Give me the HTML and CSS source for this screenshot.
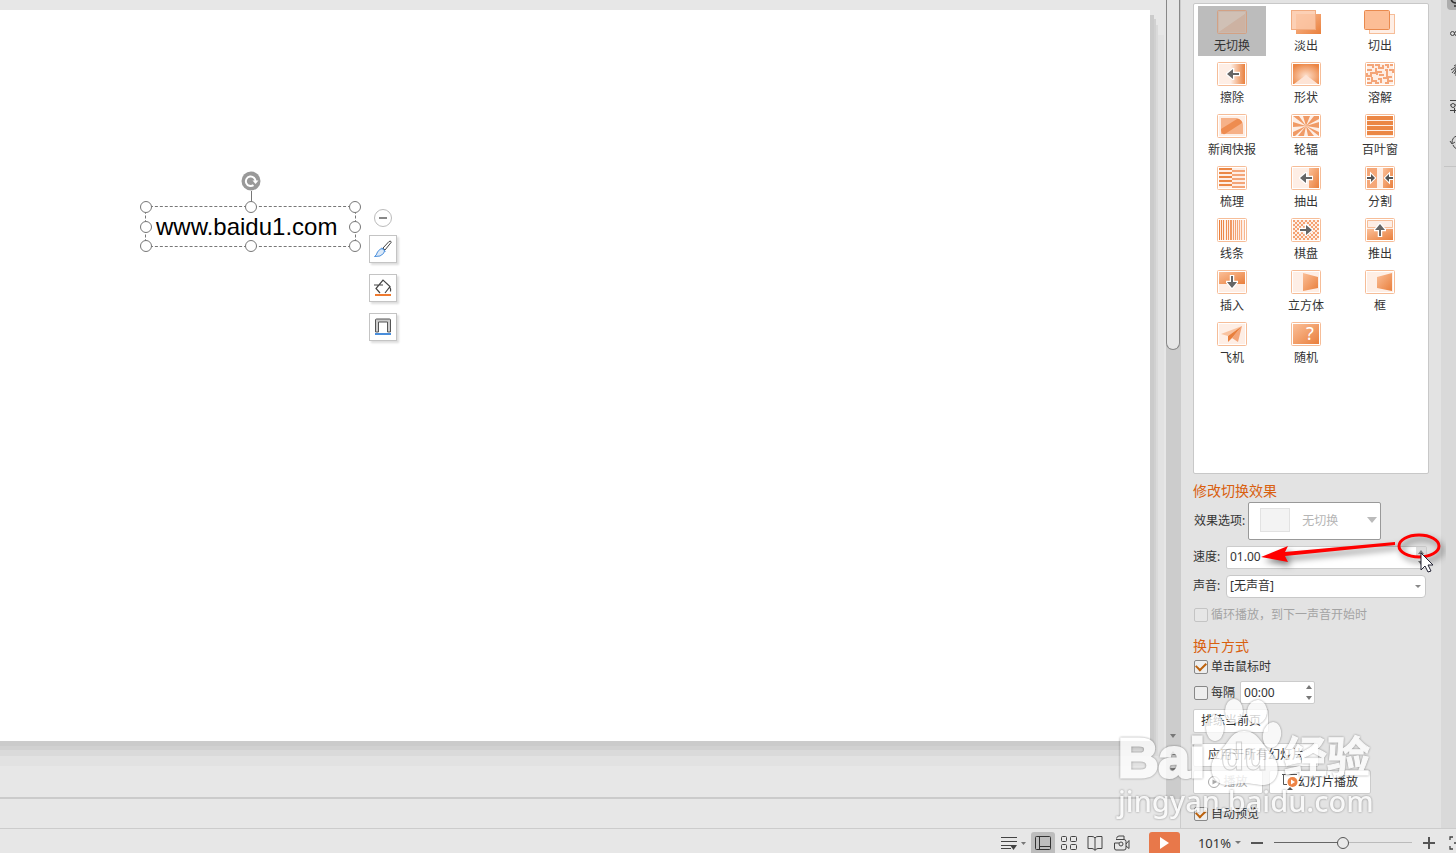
FILE: index.html
```html
<!DOCTYPE html>
<html lang="zh-CN">
<head>
  <meta charset="UTF-8">
  <meta name="viewport" content="width=device-width, initial-scale=1.0">
  <title>幻灯片切换</title>
  <link rel="stylesheet" href="styles.css">
</head>
<body>

<!-- shared gradients and patterns for the transition icons -->
<svg class="defs" width="0" height="0" aria-hidden="true">
  <defs>
    <linearGradient id="g-diag" x1="0" y1="0" x2="1" y2="1"><stop offset="0" stop-color="#fbbf98"/><stop offset="1" stop-color="#e97f3c"/></linearGradient>
    <linearGradient id="g-right" x1="0" x2="1"><stop offset="0" stop-color="#feeee5"/><stop offset=".45" stop-color="#feeee5"/><stop offset="1" stop-color="#e97f3c"/></linearGradient>
    <linearGradient id="g-left" x1="0" x2="1"><stop offset="0" stop-color="#e97f3c"/><stop offset="1" stop-color="#f9b790"/></linearGradient>
    <radialGradient id="g-shape" cx=".5" cy=".6" r=".65"><stop offset="0" stop-color="#fde0cd"/><stop offset="1" stop-color="#ec8543"/></radialGradient>
    <pattern id="p-check" width="4" height="4" patternUnits="userSpaceOnUse"><path d="M0 0h2v2H0zM2 2h2v2H2z" fill="#f4a171"/></pattern>
    <symbol id="frame" viewBox="0 0 30 24"><rect x=".5" y=".5" width="29" height="23" rx="1" fill="#fff" stroke="#f6bd98"/><rect x="2" y="2" width="26" height="20" fill="#feeee5"/></symbol>
    <symbol id="arrow" viewBox="0 0 14 12"><path d="M1 6l6-5v4h6v2H7v4z" fill="#666" stroke="#fff" stroke-width="2.500" paint-order="stroke"/></symbol>
  </defs>
</svg>

<div class="app">
  <div class="main">
    <div class="editor">
      <div class="workspace">
        <div class="slide">
          <div class="textbox">
            <span class="stem"></span>
            <button class="rotate" aria-label="旋转"><svg width="20" height="20" viewBox="0 0 20 20"><circle cx="10" cy="10" r="9.500" fill="#999"/><path d="M14.500 10.500a4.800 4.800 0 1 0-2 3.600" fill="none" stroke="#fff" stroke-width="2"/><path d="M11.500 9.500h6l-3 3.500z" fill="#fff"/></svg></button>
            <p>www.baidu1.com</p>
            <i class="handle nw"></i><i class="handle n"></i><i class="handle ne"></i>
            <i class="handle w"></i><i class="handle e"></i>
            <i class="handle sw"></i><i class="handle s"></i><i class="handle se"></i>
          </div>
          <div class="float-tools">
            <button class="collapse" aria-label="收起"></button>
            <button class="tool" aria-label="样式"><svg width="20" height="20" viewBox="0 0 20 20" fill="none"><path d="M10 9l6-6.500q2-1.200 2.200.8L12 11z" stroke="#444"/><path d="M1.500 17.500q2-1 3-4.500 2.500-4 5.500-3.500 3 2 .5 5Q8 18 1.500 17.500z" fill="#dbe9f8" stroke="#4a8edb"/><path d="M8.500 9l4 3.500" stroke="#4a8edb"/></svg></button>
            <button class="tool" aria-label="填充"><svg width="20" height="20" viewBox="0 0 20 20" fill="none" stroke="#444" stroke-width="1.200"><path d="M7 15l-4-4.500L10 2l7 6.500-5 6.500M1 7h9M16.500 8.500q1.500 2 1 5"/><path d="M2 17h16" stroke="#ee7a30" stroke-width="2"/></svg></button>
            <button class="tool" aria-label="轮廓"><svg width="20" height="20" viewBox="0 0 20 20" fill="none" stroke="#555"><path d="M2.500 15V3q0-1 1-1h13q1 0 1 1v12h-3V5h-9v10z" fill="#ccc"/><path d="M2 17h16" stroke="#4a8edb" stroke-width="2"/></svg></button>
          </div>
        </div>
        <div class="scrollbar">
          <div class="thumb"></div>
          <div class="scroll-btns">
            <button class="tri down" aria-label="向下滚动"></button>
            <button class="tri up" aria-label="上一页"></button>
            <button class="tri down" aria-label="下一页"></button>
          </div>
        </div>
      </div>
      <div class="notes"></div>
    </div>

    <div class="panel">
      <div class="gallery">
        <button class="fx selected"><svg viewBox="0 0 30 24"><rect x=".5" y=".5" width="29" height="23" rx="1" fill="#c9b8ad" stroke="#d3a184"/><path d="M2 22L28 4V2H2z" fill="#d0c0b5"/><path d="M2 22L28 4v18z" fill="#cdb2a2"/></svg>无切换</button>
        <button class="fx"><svg viewBox="0 0 30 24"><path d="M5 4h25v20H5z" fill="url(#g-diag)"/><rect x=".5" y=".5" width="24" height="19" fill="#fcc8a8" fill-opacity=".85" stroke="#f1ab80"/></svg>淡出</button>
        <button class="fx"><svg class="wide" viewBox="0 0 32 24"><rect x="5.500" y="4.500" width="25" height="19" fill="#feeee5" stroke="#f6bd98"/><rect x=".5" y=".5" width="25" height="19" rx="1" fill="#fcbd95" stroke="#e98a4e"/></svg>切出</button>

        <button class="fx"><svg viewBox="0 0 30 24"><use href="#frame"/><rect x="2" y="2" width="26" height="20" fill="url(#g-right)"/><use href="#arrow" x="9" y="6" width="14" height="12"/></svg>擦除</button>
        <button class="fx"><svg viewBox="0 0 30 24"><use href="#frame"/><rect x="2" y="2" width="26" height="20" fill="url(#g-shape)"/><path d="M3 22l12-9 12 9z" fill="#fde4d6"/></svg>形状</button>
        <button class="fx"><svg viewBox="0 0 30 24"><use href="#frame"/><path d="M2 3h6v3M10 3h4v3h4V3M20 3h3v3M25 3h3M2 8h5M11 6v4h6M20 8h2v4M24 8h4v3M2 11v3h4v-3h6v2M14 13h5M22 12v3h5M2 17h3M7 15v4h5M13 17h3v4M18 16h5v3h5M2 21h5M10 21h4M20 21h4" fill="none" stroke="#f4a578" stroke-width="2"/></svg>溶解</button>

        <button class="fx"><svg viewBox="0 0 30 24"><use href="#frame"/><path d="M4 4h22v16H4z" fill="#f6b188"/><path d="M4 15L20 5q5-1 5 4L8 20q-4 1-4-5z" fill="#ee8c50"/><path d="M20 4h6v7q0-5-6-7z" fill="#feeee5"/></svg>新闻快报</button>
        <button class="fx"><svg viewBox="0 0 30 24"><use href="#frame"/><path d="M15 12L2 2h6zM15 12L12 2h7zM15 12L23 2h5v3zM15 12l13-4v6zM15 12l13 6v4zM15 12l8 10h-6zM15 12l-2 10H7zM15 12L4 22H2v-4zM15 12L2 13V8z" fill="#f09a65"/></svg>轮辐</button>
        <button class="fx"><svg viewBox="0 0 30 24"><use href="#frame"/><path d="M2 2h26v4H2zM2 7h26v4H2zM2 12h26v4H2zM2 17h26v4H2z" fill="#eb8745"/></svg>百叶窗</button>

        <button class="fx"><svg viewBox="0 0 30 24"><use href="#frame"/><path d="M2 3h13M2 7h13M2 11h13M2 15h13M2 19h13" stroke="#eb8745" stroke-width="2"/><path d="M15 5h13M15 9h13M15 13h13M15 17h13M15 21h13" stroke="#f4a578" stroke-width="2"/></svg>梳理</button>
        <button class="fx"><svg viewBox="0 0 30 24"><use href="#frame"/><path d="M18 2h10v20H18z" fill="url(#g-diag)"/><use href="#arrow" x="8" y="6" width="14" height="12"/></svg>抽出</button>
        <button class="fx"><svg viewBox="0 0 30 24"><use href="#frame"/><path d="M2 2h10v20H2z" fill="#f5a778"/><path d="M18 2h10v20H18z" fill="url(#g-diag)"/><path d="M2 11h4V8l4 4-4 4v-3H2zM28 11h-4V8l-4 4 4 4v-3h4z" fill="#555" stroke="#fff" paint-order="stroke" stroke-width="2"/></svg>分割</button>

        <button class="fx"><svg viewBox="0 0 30 24"><use href="#frame"/><path d="M2 2h1v20H2zM4 2h1v20H4zM6 2h1v20H6zM9 2h1v20H9zM11 2h1v20h-1zM13 2h2v20h-2zM16 2h1v20h-1zM18 2h1v20h-1zM20 2h1v20h-1zM22 2h1v20h-1zM24 2h1v20h-1zM27 2h1v20h-1z" fill="url(#g-left)"/></svg>线条</button>
        <button class="fx"><svg viewBox="0 0 30 24"><use href="#frame"/><rect x="2" y="2" width="26" height="20" fill="url(#p-check)"/><use href="#arrow" x="8" y="6" width="14" height="12" transform="rotate(180 15 12)"/></svg>棋盘</button>
        <button class="fx"><svg viewBox="0 0 30 24"><use href="#frame"/><path d="M2 11h26v11H2z" fill="url(#g-diag)"/><path d="M2.500 2.500h25v7h-25z" fill="#feeee5" stroke="#f6bd98"/><use href="#arrow" x="8" y="6" width="14" height="12" transform="rotate(90 15 12)"/></svg>推出</button>

        <button class="fx"><svg viewBox="0 0 30 24"><use href="#frame"/><path d="M2 2h26v12H2z" fill="url(#g-diag)"/><use href="#arrow" x="8" y="6" width="14" height="12" transform="rotate(-90 15 12)"/></svg>插入</button>
        <button class="fx"><svg viewBox="0 0 30 24"><use href="#frame"/><path d="M12 3l15 4v11l-15 3z" fill="url(#g-diag)"/></svg>立方体</button>
        <button class="fx"><svg viewBox="0 0 30 24"><use href="#frame"/><path d="M27 3L12 7v11l15 3z" fill="url(#g-diag)"/></svg>框</button>

        <button class="fx"><svg viewBox="0 0 30 24"><use href="#frame"/><path d="M4 12L25 4 11 14z" fill="#f9c3a0"/><path d="M25 4l-4 16-6-4z" fill="#f4a578"/><path d="M25 4L11 14v6l4-4z" fill="#e97f3c"/></svg>飞机</button>
        <button class="fx"><svg viewBox="0 0 30 24"><use href="#frame"/><rect x="2" y="2" width="26" height="20" fill="url(#g-diag)"/><text x="15" y="18" class="q">?</text></svg>随机</button>
      </div>

      <h3>修改切换效果</h3>
      <div class="row effect">
        <label for="effect">效果选项:</label>
        <div class="effect-box">
          <span class="swatch"></span>
          <select id="effect" disabled><option>无切换</option></select>
          <span class="big-caret"></span>
        </div>
      </div>
      <div class="row speed">
        <label for="speed">速度:</label>
        <div class="spin">
          <input type="text" id="speed" value="01.00">
          <div class="spin-btns"><button class="tri up" aria-label="增加"></button><button class="tri down" aria-label="减少"></button></div>
        </div>
        <svg class="pointer" width="190" height="52" viewBox="0 0 190 52" aria-hidden="true">
          <g class="red">
            <ellipse cx="163" cy="16" rx="20" ry="11" fill="none" stroke="#f00" stroke-width="3"/>
            <path d="M139 12v3L29 26l3 6-27-5 27-11-3 6z" fill="#f00"/>
          </g>
          <path d="M165 23v17l4-4 3 6 3-1-3-6h5z" fill="#fff" stroke="#223"/>
        </svg>
      </div>
      <div class="row sound">
        <label for="sound">声音:</label>
        <select id="sound"><option>[无声音]</option></select>
      </div>
      <label class="check loop"><input type="checkbox" disabled>循环播放，到下一声音开始时</label>

      <h3 class="advance">换片方式</h3>
      <label class="check"><input type="checkbox" checked>单击鼠标时</label>
      <div class="row every">
        <label class="check"><input type="checkbox">每隔</label>
        <div class="spin">
          <input type="text" value="00:00" aria-label="间隔时间">
          <div class="spin-btns"><button class="tri up" aria-label="增加"></button><button class="tri down" aria-label="减少"></button></div>
        </div>
      </div>
      <button class="btn rehearse">排练当前页</button>
      <button class="btn apply-all">应用于所有幻灯片</button>
      <div class="row play">
        <button class="btn preview" disabled><svg width="12" height="12" viewBox="0 0 12 12"><circle cx="6" cy="6" r="5.500" fill="none" stroke="#aaa"/><path d="M4.500 3.500L9 6l-4.500 2.500z" fill="#aaa"/></svg>播放</button>
        <button class="btn show"><svg width="16" height="18" viewBox="0 0 16 18"><path d="M0 1.500h15M1.500 2v9.500H5" fill="none" stroke="#555"/><circle cx="10.500" cy="9" r="5" fill="#ee8344"/><path d="M9 6.500l4 2.500-4 2.500z" fill="#fff"/><path d="M5 17l3-3 3 3z" fill="#555"/></svg>幻灯片播放</button>
      </div>
      <label class="check auto"><input type="checkbox" checked>自动预览</label>
    </div>

    <div class="rail">
      <button class="current" aria-label="切换"><svg width="16" height="16" viewBox="0 0 16 16" fill="none" stroke="#333" stroke-width="1.500"><path d="M2 5q1 4 5 4M5 12h5"/></svg></button>
      <button aria-label="属性"><svg width="16" height="16" viewBox="0 0 16 16" fill="none" stroke="#444"><circle cx="3.500" cy="8.500" r="2"/><path d="M14 6H8q-2.500.500-2.500 2.500T8 11h6"/></svg></button>
      <button aria-label="动画"><svg width="16" height="16" viewBox="0 0 16 16" fill="none" stroke="#444"><path d="M5 5l5-3M2 9l6-4M3 12l5-6M5 13l3-5M7 15V8"/></svg></button>
      <button aria-label="设置"><svg width="16" height="16" viewBox="0 0 16 16" fill="none" stroke="#444"><path d="M1 3.500h14M1 8h1M6 8h9M1 13.500h14M5.500 11v5"/><circle cx="4" cy="8.500" r="2"/></svg></button>
      <button aria-label="历史"><svg width="16" height="16" viewBox="0 0 16 16" fill="none" stroke="#444"><path d="M1 8l2 3 3-2M3 10q0-6 5-7M4 12q1 3 4 4"/></svg></button>
      <hr>
    </div>
  </div>

  <div class="statusbar">
    <button class="notes-btn" aria-label="备注"><svg width="26" height="16" viewBox="0 0 26 16" fill="none" stroke="#444"><path d="M1 2.500h16M1 6.500h16M1 10.500h10M1 13.500h10"/><path d="M10 10h7l-3.500 5z" fill="#444" stroke="none"/><path d="M21 7h5l-2.500 3z" fill="#777" stroke="none"/></svg></button>
    <button class="view on" aria-label="普通视图"><svg width="16" height="16" viewBox="0 0 16 16" fill="none" stroke="#333"><rect x=".5" y="1.500" width="15" height="13" rx="1"/><path d="M4.500 2v12M5 11.500h10"/></svg></button>
    <button class="view" aria-label="浏览视图"><svg width="16" height="16" viewBox="0 0 16 16" fill="none" stroke="#444"><rect x=".5" y="1.500" width="5" height="5" rx="1"/><rect x="9.500" y="1.500" width="6" height="5" rx="1"/><rect x=".5" y="9.500" width="5" height="5" rx="1"/><rect x="9.500" y="9.500" width="6" height="5" rx="1"/></svg></button>
    <button class="view" aria-label="阅读视图"><svg width="16" height="16" viewBox="0 0 16 16" fill="none" stroke="#444"><path d="M8 3q-1-1.500-3-1.500H1v12h4q2 0 3 2 1-2 3-2h4v-12h-4Q9 1.500 8 3zM8 3v12"/></svg></button>
    <button class="view" aria-label="录制"><svg width="18" height="16" viewBox="0 0 18 16" fill="none" stroke="#444"><path d="M3.500 3.500Q4 1 6 1h5v3M3 4.500h8q2 0 2 2V13q0 2-2 2H3q-1.500 0-1.500-2V8H6"/><circle cx="8" cy="9" r="2"/><path d="M13 9l3-3.500v8L13 11"/></svg></button>
    <button class="start" aria-label="放映"><svg width="10" height="12" viewBox="0 0 10 12"><path d="M1 0l9 6-9 6z" fill="#fff"/></svg></button>
    <button class="zoom-value">101%<i class="caret"></i></button>
    <button class="zoom-btn" aria-label="缩小"><svg width="12" height="12" viewBox="0 0 12 12"><path d="M0 6h12" stroke="#555" stroke-width="2"/></svg></button>
    <input type="range" class="zoom" min="0" max="100" value="50" aria-label="缩放">
    <button class="zoom-btn" aria-label="放大"><svg width="12" height="12" viewBox="0 0 12 12"><path d="M0 6h12M6 0v12" stroke="#555" stroke-width="2"/></svg></button>
    <button class="fit" aria-label="适应窗口"><svg width="14" height="14" viewBox="0 0 14 14" fill="none" stroke="#444" stroke-width="1.300"><path d="M4 1H1v3M1 10v3h3M5 7h4M10 1h3v3M13 10v3h-3"/></svg></button>
  </div>

  <svg class="watermark" width="270" height="126" viewBox="0 0 270 126" aria-hidden="true">
    <text x="4" y="80" class="wm-latin">Bai</text>
    <ellipse cx="120" cy="14" rx="9" ry="12"/>
    <ellipse cx="143" cy="15" rx="10" ry="12" transform="rotate(8 143 15)"/>
    <ellipse cx="101" cy="31" rx="9" ry="13"/>
    <ellipse cx="158" cy="38" rx="9" ry="13" transform="rotate(10 158 38)"/>
    <path d="M130 34c-13 0-15 12-24 20-14 11-10 33 6 34 7 0 11-2 18-2s12 2 20 2c16-1 18-22 6-33-9-8-12-21-26-21z"/>
    <text x="107" y="73" class="wm-du">du</text>
    <text x="170" y="76" class="wm-cjk">经验</text>
    <text x="4" y="115" class="wm-url">jingyan.baidu.com</text>
  </svg>
</div>

</body>
</html>
```

FILE: styles.css
```css
* {
  box-sizing: border-box;
  margin: 0;
  padding: 0;
}
body {
  font-family: "Noto Sans", "Noto Sans CJK SC", sans-serif;
  font-size: 12px;
  line-height: 16px;
  color: #333;
  background: #e7e7e7;
  overflow: hidden;
}
button, input, select {
  font: inherit;
  color: inherit;
}
button {
  background: transparent;
  border: none;
  cursor: pointer;
}
svg {
  display: block;
}
.defs {
  position: absolute;
}
.app {
  position: relative;
  display: flex;
  flex-direction: column;
  height: 100vh;
}
.main {
  flex: 1;
  display: flex;
  min-height: 0;
}

/* slide area */
.editor {
  flex: 1;
  min-width: 0;
  display: flex;
  flex-direction: column;
}
.workspace {
  flex: 1;
  display: flex;
  justify-content: space-between;
  min-height: 0;
  overflow: hidden;
}
.slide {
  position: relative;
  flex: 1;
  margin: 10px 16px 56px 0;
  background: #fff;
  box-shadow: 4px 5px #cbcbcb, -4px 5px #cbcbcb, 6px 9px #d1d1d1, -6px 9px #d1d1d1,
    8px 15px #dadada, -8px 15px #dadada, 14px 25px #e2e2e2, -14px 25px #e2e2e2;
}
.notes {
  height: 31px;
  border-top: 2px solid #cbcbcb;
}
.textbox {
  position: absolute;
  left: 145px;
  top: 196px;
  width: 211px;
  height: 41px;
  border: 1px dashed #777;
  padding: 6px 10px;
}
.textbox p {
  font-family: "Liberation Sans", Arial, sans-serif;
  font-size: 24px;
  line-height: 28px;
  color: #000;
  white-space: nowrap;
}
.handle {
  position: absolute;
  width: 12px;
  height: 12px;
  margin: -6px;
  border: 1px solid #777;
  border-radius: 50%;
  background: #fff;
}
.handle.nw, .handle.n, .handle.ne { top: 0; }
.handle.w, .handle.e { top: 50%; }
.handle.sw, .handle.s, .handle.se { top: 100%; }
.handle.nw, .handle.w, .handle.sw { left: 0; }
.handle.n, .handle.s { left: 50%; }
.handle.ne, .handle.e, .handle.se { left: 100%; }
.stem {
  position: absolute;
  left: 50%;
  top: -16px;
  height: 16px;
  border-left: 1px solid #777;
}
.rotate {
  position: absolute;
  left: 50%;
  top: -36px;
  margin-left: -10px;
}
.float-tools {
  position: absolute;
  left: 369px;
  top: 199px;
  display: flex;
  flex-direction: column;
  align-items: center;
}
.collapse {
  width: 18px;
  height: 18px;
  border: 1px solid #bbb;
  border-radius: 50%;
  padding: 0 4px;
}
.collapse::before {
  content: "";
  display: block;
  height: 2px;
  background: #888;
}
.tool {
  width: 28px;
  height: 28px;
  padding: 3px;
  margin-top: 11px;
  background: #fff;
  border: 1px solid #c4c4c4;
  box-shadow: 2px 2px 2px #ddd;
}
.collapse + .tool {
  margin-top: 8px;
}

/* scrollbar */
.scrollbar {
  width: 14px;
  display: flex;
  flex-direction: column;
  justify-content: space-between;
  background: #ccc;
}
.thumb {
  height: 350px;
  background: #e6e6e6;
  border: 1px solid #888;
  border-top: none;
  border-radius: 0 0 7px 7px;
}
.scroll-btns {
  display: flex;
  flex-direction: column;
  align-items: center;
  gap: 13px;
  padding-bottom: 25px;
}
.tri, .caret, .big-caret {
  display: block;
  width: 0;
  height: 0;
  border: 3px solid transparent;
}
.tri.down, .caret {
  border-top: 4px solid #777;
  border-bottom: none;
}
.tri.up {
  border-bottom: 4px solid #777;
  border-top: none;
}

/* transition panel */
.panel {
  width: 261px;
  padding: 3px 12px 0 12px;
  border-left: 1px solid #ccc;
  background: #e3e3e3;
}
.gallery {
  display: grid;
  grid-template-columns: repeat(3, 68px);
  grid-auto-rows: 50px;
  align-content: start;
  gap: 2px 6px;
  height: 471px;
  padding: 2px 4px;
  background: #fff;
  border: 1px solid #c8c8c8;
  border-radius: 2px;
}
.fx {
  display: flex;
  flex-direction: column;
  align-items: center;
  gap: 4px;
  padding-top: 4px;
  white-space: nowrap;
}
.fx svg {
  width: 30px;
  height: 24px;
  flex: none;
}
.fx .wide {
  width: 32px;
}
.fx.selected {
  background: #bcbcbc;
}
.q {
  font-size: 18px;
  fill: #fff;
}
h3 {
  margin-top: 7px;
  font-size: 14px;
  font-weight: normal;
  line-height: 20px;
  color: #d9600f;
}
.row {
  display: flex;
  align-items: center;
}
.effect {
  height: 38px;
  margin-top: 1px;
  padding-left: 1px;
  gap: 3px;
  white-space: nowrap;
}
.effect-box {
  position: relative;
  width: 133px;
}
.effect-box select {
  display: block;
  appearance: none;
  width: 100%;
  height: 38px;
  padding-left: 53px;
  color: #b5b5b5;
  opacity: 1;
  background: #fff;
  border: 1px solid #999;
  border-radius: 2px;
}
.swatch {
  position: absolute;
  left: 12px;
  top: 6px;
  width: 30px;
  height: 24px;
  background: #f3f3f3;
  border: 1px solid #e2e2e2;
}
.big-caret {
  position: absolute;
  right: 4px;
  top: 15px;
  border-width: 5px;
  border-top: 6px solid #bbb;
  border-bottom: none;
}
.speed, .sound {
  position: relative;
  height: 24px;
  margin-top: 5px;
}
.speed label, .sound label {
  width: 33px;
}
.spin {
  display: flex;
  flex: 1;
  height: 23px;
  background: #fff;
  border: 1px solid #ccc;
  border-radius: 2px;
}
.spin input {
  flex: 1;
  min-width: 0;
  padding-left: 3px;
  border: none;
  background: transparent;
}
.spin-btns {
  display: flex;
  flex-direction: column;
  justify-content: space-between;
  padding: 3px 2px;
}
.speed .spin {
  margin-right: 2px;
}
.speed .spin-btns {
  background: linear-gradient(#ddd 50%, #fff 50%);
}
.pointer {
  position: absolute;
  left: 63px;
  top: -15px;
}
.red {
  filter: drop-shadow(3px 4px 3px rgba(0, 0, 0, 0.5));
}
.sound {
  padding-right: 3px;
}
.sound select {
  appearance: none;
  flex: 1;
  height: 23px;
  padding-left: 3px;
  border: 1px solid #c8c8c8;
  border-radius: 4px;
  background: #fff;
}
.sound::after {
  content: "";
  position: absolute;
  right: 8px;
  top: 11px;
  border: 3px solid transparent;
  border-top: 3px solid #888;
  border-bottom: none;
}
.check {
  display: flex;
  align-items: center;
  gap: 3px;
  height: 16px;
  padding-left: 1px;
  white-space: nowrap;
}
.check input {
  appearance: none;
  display: grid;
  place-items: center;
  width: 14px;
  height: 14px;
  border: 1px solid #888;
  border-radius: 2px;
  background: #eee;
}
.check input:checked::before {
  content: "";
  width: 8px;
  height: 5px;
  margin-top: -3px;
  border-left: 2px solid #bd620d;
  border-bottom: 2px solid #bd620d;
  transform: rotate(-45deg);
}
.loop {
  margin-top: 9px;
  color: #a3a3a3;
}
.loop input {
  border-color: #c4c4c4;
  background: #e6e6e6;
}
.advance {
  margin-top: 13px;
  margin-bottom: 3px;
}
.every {
  margin-top: 6px;
  gap: 5px;
}
.every .spin {
  flex: none;
  width: 75px;
}
.btn {
  display: flex;
  align-items: center;
  justify-content: center;
  height: 24px;
  background: #fff;
  border: 1px solid #ccc;
  border-radius: 2px;
  white-space: nowrap;
}
.rehearse {
  width: 76px;
  margin-top: 5px;
}
.apply-all {
  width: 126px;
  margin-top: 10px;
}
.play {
  margin-top: 3px;
  gap: 6px;
}
.preview {
  width: 70px;
  gap: 3px;
  color: #aaa;
}
.show {
  width: 102px;
}
.auto {
  margin-top: 12px;
}

/* right tool rail */
.rail {
  width: 15px;
  overflow: hidden;
  background: #d9d9d9;
}
.rail button {
  display: block;
  margin: 0 0 20px 8px;
}
.rail .current {
  height: 10px;
  margin: 0 0 15px 6px;
  padding-left: 2px;
  background: #adadad;
  border-radius: 0 0 4px 4px;
}
.rail .current svg {
  margin-top: -6px;
}
.rail hr {
  margin: -3px 0 0 3px;
  border: none;
  border-top: 1px solid #c4c4c4;
}

/* status bar */
.statusbar {
  display: flex;
  align-items: center;
  justify-content: flex-end;
  height: 25px;
  padding-top: 3px;
  border-top: 1px solid #ccc;
  overflow: hidden;
}
.statusbar button {
  flex: none;
}
.notes-btn {
  margin-right: 5px;
}
.view {
  height: 22px;
  padding: 3px 4px;
  margin-right: 2px;
}
.view.on {
  background: #bdbdbd;
  border-radius: 3px 3px 0 0;
}
.start {
  display: grid;
  place-items: center;
  width: 31px;
  height: 22px;
  margin: 0 18px 0 12px;
  background: #e8784a;
  border-radius: 3px 3px 0 0;
}
.zoom-value {
  display: flex;
  align-items: center;
  gap: 4px;
  margin-right: 10px;
  font-size: 13px;
}
.caret {
  border-top-width: 3px;
}
.zoom {
  appearance: none;
  width: 138px;
  height: 14px;
  margin: 0 11px;
  background: linear-gradient(90deg, #666 50%, #bbb 50%) center / 100% 1px no-repeat;
}
.zoom::-webkit-slider-thumb {
  appearance: none;
  width: 12px;
  height: 12px;
  border: 1px solid #555;
  border-radius: 50%;
  background: #e9e9e9;
}
.fit {
  width: 7px;
  margin-left: 14px;
}

/* watermark */
.watermark {
  position: absolute;
  right: 72px;
  bottom: 30px;
  pointer-events: none;
  fill: #fff;
  opacity: 0.78;
  filter: drop-shadow(0 0 1px rgba(0, 0, 0, 0.5));
}
.wm-latin {
  font: bold 56px "Liberation Sans", sans-serif;
  stroke: #fff;
  stroke-width: 3px;
}
.wm-du {
  font: bold 38px "Liberation Sans", sans-serif;
  stroke: #ccc;
}
.wm-cjk {
  font: bold 43px "Noto Sans CJK SC", sans-serif;
  stroke: #fff;
}
.wm-url {
  font: 500 29px "Noto Sans", sans-serif;
}
```
